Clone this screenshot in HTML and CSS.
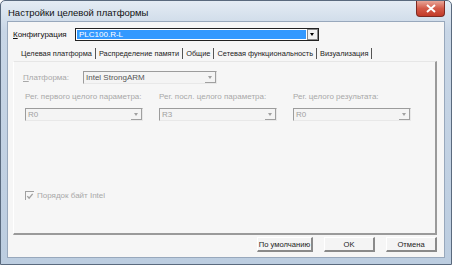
FILE: index.html
```html
<!DOCTYPE html>
<html lang="ru">
<head>
    <meta charset="UTF-8">
    <title>Настройки целевой платформы</title>
    <link rel="stylesheet" href="styles.css">
</head>
<body>
    <div class="window">
        <div class="titlebar">
            <span class="title">Настройки целевой платформы</span>
            <div class="close">
                <svg width="10" height="9" viewBox="0 0 10 9">
                    <path d="M1 1 L9 8 M9 1 L1 8" stroke="#fff" stroke-width="2"/>
                </svg>
            </div>
        </div>

        <div class="client">
            <div class="config-row">
                <span class="label"><u>К</u>онфигурация</span>
                <div class="combo active">
                    <span class="value">PLC100.R-L</span>
                    <span class="arrow"></span>
                </div>
            </div>

            <div class="tabs">
                <span class="tab">Целевая платформа</span>
                <span class="tab">Распределение памяти</span>
                <span class="tab">Общие</span>
                <span class="tab">Сетевая функциональность</span>
                <span class="tab">Визуализация</span>
            </div>

            <div class="panel">
                <div class="platform-row">
                    <span class="label grey"><u>П</u>латформа:</span>
                    <div class="combo disabled platform">
                        <span class="value dark">Intel StrongARM</span>
                        <span class="arrow"></span>
                    </div>
                </div>

                <div class="regs">
                    <div class="reg">
                        <span class="label grey">Рег. первого целого параметра:</span>
                        <div class="combo disabled">
                            <span class="value">R0</span>
                            <span class="arrow"></span>
                        </div>
                    </div>
                    <div class="reg">
                        <span class="label grey">Рег. посл. целого параметра:</span>
                        <div class="combo disabled">
                            <span class="value">R3</span>
                            <span class="arrow"></span>
                        </div>
                    </div>
                    <div class="reg">
                        <span class="label grey">Рег. целого результата:</span>
                        <div class="combo disabled">
                            <span class="value">R0</span>
                            <span class="arrow"></span>
                        </div>
                    </div>
                </div>

                <div class="check-row">
                    <span class="checkbox">
                        <svg width="9" height="9" viewBox="0 0 9 9">
                            <path d="M1.5 4 L3.5 6.5 L7.5 1.5" stroke="#a0a0a0" stroke-width="1.5" fill="none"/>
                        </svg>
                    </span>
                    <span class="label grey">Порядок байт Intel</span>
                </div>
            </div>

            <div class="buttons">
                <button class="btn wide">По умолчанию</button>
                <button class="btn">OK</button>
                <button class="btn">Отмена</button>
            </div>
        </div>
    </div>
</body>
</html>
```

FILE: styles.css
```css
body {
    margin: 0;
    padding: 0;
    font-family: 'Liberation Sans', Arial, sans-serif;
    font-size: 8px;
    color: #222;
}

.window {
    width: 452px;
    height: 265px;
    box-sizing: border-box;
    border: 1px solid #5a6a7e;
    border-radius: 5px 5px 0 0;
    background: linear-gradient(#e4ecf4, #c8d6e6 30px, #bccde0);
    display: flex;
    flex-direction: column;
}

.titlebar {
    height: 20px;
    display: flex;
    align-items: flex-start;
    padding-left: 7px;
}

.title {
    margin-top: 6px;
    font-size: 9.5px;
    color: #111;
}

.close {
    margin-left: auto;
    margin-right: 6px;
    width: 29px;
    height: 16px;
    box-sizing: border-box;
    border: 1px solid #7d2a22;
    border-top: none;
    border-radius: 0 0 4px 4px;
    background: linear-gradient(#e8a597, #d35a48 50%, #c23a28);
    display: flex;
    align-items: center;
    justify-content: center;
}

.client {
    flex: 1;
    margin: 0 6px 6px 6px;
    background: #f6f6f6;
    border: 1px solid #98a8bc;
    display: flex;
    flex-direction: column;
    padding: 0 7px 0 5px;
}

.config-row {
    display: flex;
    align-items: center;
    height: 13px;
    margin-top: 6px;
}

.config-row .label {
    width: 62px;
    color: #111;
}

.combo {
    display: flex;
    align-items: center;
    height: 13px;
    box-sizing: border-box;
    border: 1px solid #9c9c9c;
    border-right-color: #e8e8e8;
    border-bottom-color: #e8e8e8;
    background: #f4f4f4;
}

.combo .value {
    flex: 1;
    padding-left: 2px;
    color: #a0a0a0;
    white-space: nowrap;
}

.combo .value.dark {
    color: #555;
}

.combo .arrow {
    width: 11px;
    height: 11px;
    box-sizing: border-box;
    border-right: 1px solid #a0a0a0;
    border-bottom: 1px solid #a0a0a0;
    position: relative;
}

.combo .arrow::after {
    content: "";
    position: absolute;
    left: 3px;
    top: 4px;
    border-left: 2.5px solid transparent;
    border-right: 2.5px solid transparent;
    border-top: 3px solid #a0a0a0;
}

.combo.active {
    width: 244px;
    border: 1px solid #222;
    background: #fff;
}

.combo.active .value {
    background: #3399ff;
    color: #fff;
    margin: 1px;
    height: 9px;
    line-height: 9px;
}

.combo.active .arrow {
    border: 1px solid #888;
    background: #f0f0f0;
}

.combo.active .arrow::after {
    left: 2px;
    top: 3px;
    border-top-color: #000;
}

.tabs {
    display: flex;
    margin-top: 6px;
    padding-left: 5px;
    height: 13px;
    align-items: center;
}

.tab {
    padding: 0 3px;
    border-right: 1px solid #555;
    line-height: 11px;
    font-size: 7.4px;
    color: #222;
    white-space: nowrap;
}

.panel {
    margin-top: 1px;
    height: 174px;
    box-sizing: border-box;
    border: 1px solid #fff;
    border-right: 2px solid #9a9a9a;
    border-bottom: 2px solid #9a9a9a;
    border-top-color: #e6e6e6;
    padding: 9px 0 0 9px;
    display: flex;
    flex-direction: column;
}

.label {
    white-space: nowrap;
}

.grey {
    color: #a8a8a8;
}

.platform-row {
    display: flex;
    align-items: center;
}

.platform-row .label {
    width: 60px;
}

.combo.platform {
    width: 134px;
}

.regs {
    display: flex;
    gap: 16px;
    margin-top: 8px;
    padding-left: 2px;
}

.reg {
    display: flex;
    flex-direction: column;
    gap: 7px;
    width: 118px;
}

.check-row {
    display: flex;
    align-items: center;
    gap: 3px;
    margin-top: 70px;
    padding-left: 2px;
}

.checkbox {
    width: 9px;
    height: 9px;
    box-sizing: border-box;
    border-left: 1px solid #a0a0a0;
    border-top: 1px solid #a0a0a0;
    display: flex;
}

.buttons {
    display: flex;
    justify-content: flex-end;
    gap: 11px;
    margin-top: 2px;
}

.btn {
    font-family: 'Liberation Sans', Arial, sans-serif;
    font-size: 7.6px;
    color: #222;
    width: 51px;
    height: 15px;
    padding: 0;
    white-space: nowrap;
    background: #f4f4f4;
    border: 1px solid #fff;
    border-right: 2px solid #8a8a8a;
    border-bottom: 2px solid #8a8a8a;
}

.btn.wide {
    width: 56px;
}
```
